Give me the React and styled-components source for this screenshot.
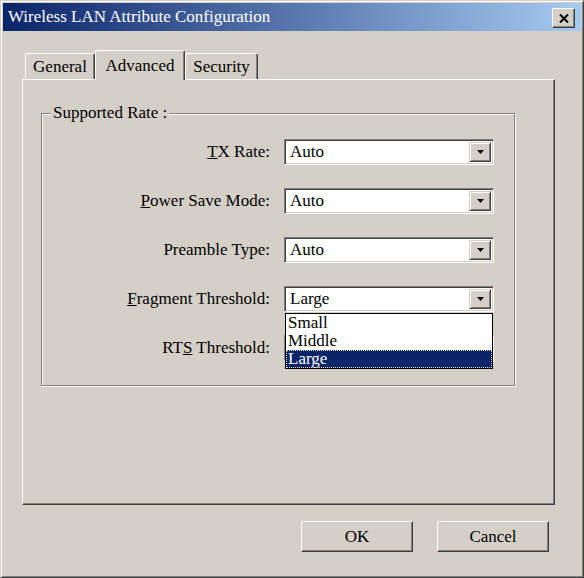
import styled, { createGlobalStyle } from 'styled-components';

const GlobalStyle = createGlobalStyle`
  html, body {
    margin: 0;
    padding: 0;
    background: #d4d0c8;
  }
  body {
    font-family: "Liberation Serif", "Times New Roman", serif;
  }
`

const Window = styled.div`
  box-sizing: border-box;
  width: 584px;
  height: 578px;
  display: flex;
  flex-direction: column;
  padding: 2px;
  background: #d4d0c8;
  border: 1px solid;
  border-color: #d4d0c8 #404040 #404040 #d4d0c8;
  box-shadow: inset 1px 1px #fff, inset -1px -1px #808080;
`

const TitleBar = styled.div`
  height: 28px;
  flex: none;
  display: flex;
  align-items: center;
  justify-content: space-between;
  padding: 0 6px 0 5px;
  background: linear-gradient(to right, #0a246a, #a6caf0);
  color: #fff;
  font-size: 17px;
`

const CloseButton = styled.div`
  box-sizing: border-box;
  width: 23px;
  height: 20px;
  display: flex;
  align-items: center;
  justify-content: center;
  margin-top: 2px;
  background: #d4d0c8;
  border: 1px solid;
  border-color: #fff #404040 #404040 #fff;
  box-shadow: inset -1px -1px #808080;
`

const Content = styled.div`
  flex: 1;
  display: flex;
  flex-direction: column;
  padding: 19px 26px 0 19px;
`

const TabStrip = styled.div`
  display: flex;
  align-items: flex-end;
  height: 29px;
  padding-left: 3px;
`

const Tab = styled.div`
  box-sizing: border-box;
  width: ${p => p.$w}px;
  height: ${p => (p.$active ? 30 : 26)}px;
  display: flex;
  align-items: center;
  justify-content: center;
  padding-top: 1px;
  font-size: 17px;
  background: #d4d0c8;
  border-top: 1px solid #fff;
  border-left: 1px solid #fff;
  border-right: 1px solid #404040;
  border-radius: 2px 2px 0 0;
  box-shadow: inset -1px 0 #808080;
  position: relative;
  z-index: ${p => (p.$active ? 1 : 0)};
  margin-bottom: ${p => (p.$active ? -1 : 0)}px;
`

const Panel = styled.div`
  box-sizing: border-box;
  height: 426px;
  padding: 33px 0 0 18px;
  border: 1px solid;
  border-color: #fff #404040 #404040 #fff;
  box-shadow: inset -1px -1px #808080;
`

const GroupBox = styled.div`
  box-sizing: border-box;
  width: 474px;
  height: 273px;
  border: 1px solid #808080;
  box-shadow: inset 1px 1px #fff, 1px 1px #fff;
`

const Legend = styled.div`
  width: fit-content;
  margin: -10px 0 0 9px;
  padding: 0 2px;
  height: 18px;
  line-height: 18px;
  font-size: 17px;
  background: #d4d0c8;
`

const FieldGrid = styled.div`
  display: grid;
  grid-template-columns: 228px 210px;
  grid-auto-rows: 26px;
  column-gap: 14px;
  row-gap: 23px;
  margin-top: 17px;
`

const Label = styled.div`
  display: flex;
  align-items: center;
  justify-content: flex-end;
  font-size: 17px;
  white-space: pre;
`

const Combo = styled.div`
  position: relative;
  box-sizing: border-box;
  height: 26px;
  display: flex;
  align-items: center;
  padding: 2px;
  background: #fff;
  border: 1px solid;
  border-color: #808080 #fff #fff #808080;
  box-shadow: inset 1px 1px #404040, inset -1px -1px #d4d0c8;
`

const ComboText = styled.div`
  flex: 1;
  padding-left: 3px;
  font-size: 17px;
`

const DropButton = styled.div`
  box-sizing: border-box;
  width: 22px;
  height: 100%;
  display: flex;
  align-items: center;
  justify-content: center;
  background: #d4d0c8;
  border: 1px solid;
  border-color: #d4d0c8 #404040 #404040 #d4d0c8;
  box-shadow: inset 1px 1px #fff, inset -1px -1px #808080;
`

const DropList = styled.div`
  position: absolute;
  top: 100%;
  left: 0;
  right: 0;
  margin-top: 2px;
  z-index: 2;
  background: #fff;
  border: 1px solid #000;
`

const ListItem = styled.div`
  height: 18px;
  line-height: 18px;
  padding-left: 2px;
  font-size: 17px;
  background: ${p => (p.$selected ? '#0a246a' : '#fff')};
  color: ${p => (p.$selected ? '#fff' : '#000')};
  outline: ${p => (p.$selected ? '1px dotted #e8e0b0' : 'none')};
  outline-offset: -1px;
`

const ButtonRow = styled.div`
  display: flex;
  justify-content: flex-end;
  gap: 24px;
  margin-top: 16px;
  padding-right: 6px;
`

const Button = styled.div`
  box-sizing: border-box;
  width: 112px;
  height: 31px;
  display: flex;
  align-items: center;
  justify-content: center;
  font-size: 17px;
  background: #d4d0c8;
  border: 1px solid;
  border-color: #fff #404040 #404040 #fff;
  box-shadow: inset -1px -1px #808080;
`

const Arrow = () => (
  <svg width="7" height="4" viewBox="0 0 7 4">
    <polygon points="0,0 7,0 3.5,4" fill="#000" />
  </svg>
)

function ComboBox({ value, children }) {
  return (
    <Combo>
      <ComboText>{value}</ComboText>
      <DropButton>
        <Arrow />
      </DropButton>
      {children}
    </Combo>
  )
}

function App() {
  return (
    <>
      <GlobalStyle />
      <Window>
        <TitleBar>
          <span>Wireless LAN Attribute Configuration</span>
          <CloseButton>
            <svg width="10" height="9" viewBox="0 0 10 9">
              <path d="M1 0.5 L9 8.5 M9 0.5 L1 8.5" stroke="#000" strokeWidth="2" />
            </svg>
          </CloseButton>
        </TitleBar>
        <Content>
          <TabStrip>
            <Tab $w={70}>General</Tab>
            <Tab $w={90} $active>Advanced</Tab>
            <Tab $w={73}>Security</Tab>
          </TabStrip>
          <Panel>
            <GroupBox>
              <Legend>Supported Rate :</Legend>
              <FieldGrid>
                <Label><u>T</u>X Rate:</Label>
                <ComboBox value="Auto" />
                <Label><u>P</u>ower Save Mode:</Label>
                <ComboBox value="Auto" />
                <Label>Preamble Type:</Label>
                <ComboBox value="Auto" />
                <Label><u>F</u>ragment Threshold:</Label>
                <ComboBox value="Large">
                  <DropList>
                    <ListItem>Small</ListItem>
                    <ListItem>Middle</ListItem>
                    <ListItem $selected>Large</ListItem>
                  </DropList>
                </ComboBox>
                <Label>RT<u>S</u> Threshold:</Label>
                <ComboBox value="" />
              </FieldGrid>
            </GroupBox>
          </Panel>
          <ButtonRow>
            <Button>OK</Button>
            <Button>Cancel</Button>
          </ButtonRow>
        </Content>
      </Window>
    </>
  );
}

export default App;
